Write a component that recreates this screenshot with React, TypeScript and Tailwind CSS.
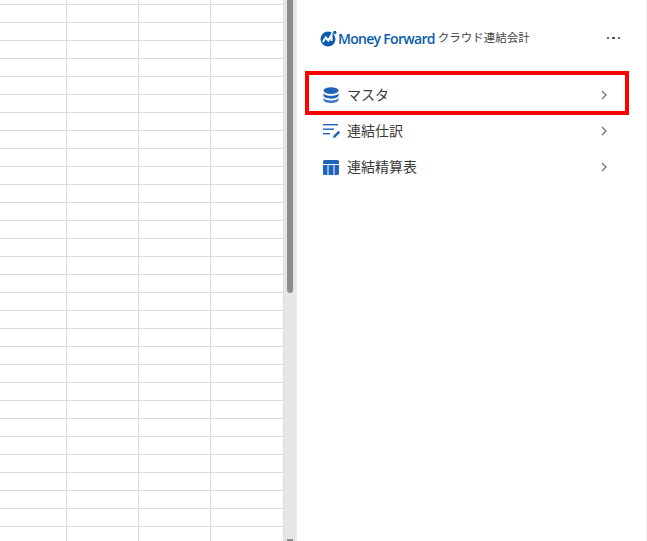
const rows = Array.from({ length: 30 }, (_, i) => i)

function DatabaseIcon() {
  return (
    <svg width="16" height="16" viewBox="0 0 16 16" fill="#1e63b8">
      <ellipse cx="8" cy="3.6" rx="7.5" ry="3.4" />
      <path d="M.5 6.2C1.6 8 4.5 8.8 8 8.8s6.400-.8 7.500-2.600v2.400C15.500 10.500 12 11.700 8 11.700S.5 10.500.5 8.600z" />
      <path d="M.5 10.800C1.600 12.600 4.500 13.400 8 13.400s6.400-.8 7.500-2.600v1.900C15.500 14.700 12 16 8 16S.5 14.700.5 12.700z" opacity="0.85" />
    </svg>
  )
}

function JournalIcon() {
  return (
    <svg width="18" height="16" viewBox="0 0 18 16" fill="#1e63b8">
      <rect x="0" y="1" width="15" height="1.400" />
      <rect x="0" y="5.500" width="11" height="1.400" />
      <rect x="0" y="10" width="7" height="1.400" />
      <path d="M10 15l.5-2.200 5-5 1.700 1.700-5 5z" />
    </svg>
  )
}

function TableIcon() {
  return (
    <svg width="16" height="15" viewBox="0 0 16 15" fill="#1e63b8">
      <path d="M0 1.500A1.500 1.500 0 0 1 1.500 0h13A1.500 1.500 0 0 1 16 1.500V4H0z" />
      <path d="M0 5h4.500v10H1.500A1.500 1.500 0 0 1 0 13.500z" />
      <rect x="5.500" y="5" width="5" height="10" />
      <path d="M11.500 5H16v8.500a1.500 1.500 0 0 1-1.500 1.500h-3z" />
    </svg>
  )
}

function Chevron() {
  return (
    <svg width="8" height="10" viewBox="0 0 8 10" fill="none" stroke="#6b6b6b" strokeWidth="1.200">
      <path d="M2 1l4 4-4 4" />
    </svg>
  )
}

function LogoMark() {
  return (
    <svg width="17" height="17" viewBox="0 0 17 17">
      <circle cx="8" cy="9" r="7.500" fill="#0b5cad" />
      <path d="M2.800 12l3-4.500 2.500 3 3.200-5.500v6" fill="none" stroke="#fff" strokeWidth="2" />
      <circle cx="14.800" cy="2.500" r="1.700" fill="#0b5cad" />
    </svg>
  )
}

interface MenuItemProps {
  icon: React.ReactNode
  label: string
  highlighted?: boolean
}

function MenuItem({ icon, label, highlighted }: MenuItemProps) {
  return (
    <div className="relative flex h-9 items-center pl-[26px] pr-[21px]">
      {highlighted && <div className="absolute -top-[6px] left-2 right-0 h-11 border-4 border-[#ff0000]" />}
      <div className="flex w-6 items-center">{icon}</div>
      <span className="-mt-[1px] flex-1 text-[14px] text-[#3a3a3a]">{label}</span>
      <Chevron />
    </div>
  )
}

export default function App() {
  return (
    <div
      className="flex h-[541px] w-[647px] overflow-hidden bg-white"
      style={{ fontFamily: '"Noto Sans CJK JP", sans-serif' }}
    >
      {/* sheet */}
      <div className="w-[284px] shrink-0 overflow-hidden border-r border-[#dcdcdc]">
        <div className="grid h-[4px] grid-cols-[67px_72px_72px_1fr]">
          <div className="border-r-[1.500px] border-[#dcdcdc]" />
          <div className="border-r-[1.500px] border-[#dcdcdc]" />
          <div className="border-r-[1.500px] border-[#dcdcdc]" />
        </div>
        {rows.map((i) => (
          <div key={i} className="grid h-[18px] grid-cols-[67px_72px_72px_1fr] border-t-[1.500px] border-[#dcdcdc]">
            <div className="border-r-[1.500px] border-[#dcdcdc]" />
            <div className="border-r-[1.500px] border-[#dcdcdc]" />
            <div className="border-r-[1.500px] border-[#dcdcdc]" />
            <div />
          </div>
        ))}
      </div>

      {/* scrollbar */}
      <div className="flex w-[12px] shrink-0 flex-col items-center justify-between bg-[#e6e6e6]">
        <div className="h-[293px] w-[6px] rounded-b-sm bg-[#8c8c8c]" />
        <div className="h-[2px] w-[6px] bg-[#8c8c8c]" />
      </div>

      {/* side panel */}
      <div className="flex-1 border-x border-[#ececec] pr-[17px]">
        <div className="flex h-[71px] items-center pl-[23px] pr-[9px] pt-[5px]">
          <LogoMark />
          <span
            className="ml-[1px] text-[14px] font-semibold tracking-[-0.7px] text-[#0b5cad]"
            style={{ fontFamily: '"Open Sans", sans-serif' }}
          >
            Money Forward
          </span>
          <span className="ml-[3px] flex-1 text-[11.500px] text-[#444]">クラウド連結会計</span>
          <span className="flex gap-[3px]">
            <i className="size-[2.500px] rounded-full bg-[#333]" />
            <i className="size-[2.500px] rounded-full bg-[#333]" />
            <i className="size-[2.500px] rounded-full bg-[#333]" />
          </span>
        </div>
        <div className="mt-[6px]">
          <MenuItem icon={<DatabaseIcon />} label="マスタ" highlighted />
          <MenuItem icon={<JournalIcon />} label="連結仕訳" />
          <MenuItem icon={<TableIcon />} label="連結精算表" />
        </div>
      </div>
    </div>
  )
}
